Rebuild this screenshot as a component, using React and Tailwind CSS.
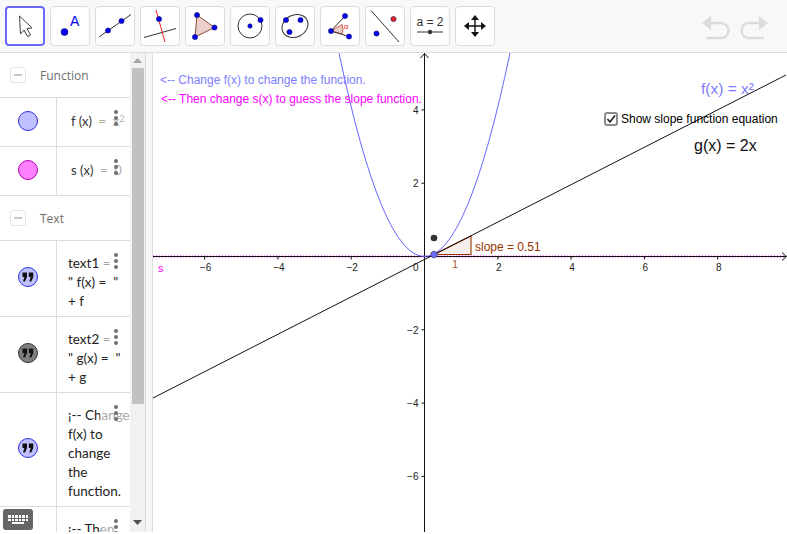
const Pt = ({ x, y, r = 2.6, fill = '#0000ff' }) => (
  <circle cx={x} cy={y} r={r} fill={fill} stroke="#1a1a50" strokeWidth="0.6" />
);

const ToolIcon = ({ box, children }) => (
  <svg width="40" height="40" viewBox={`${box} 6 40 40`} fill="none">
    {children}
  </svg>
);

const tools = [
  <ToolIcon box={5} key="move">
    <path d="M19.5 16 L20.5 34 L24 30 L27.5 36.5 L30.5 35 L27 28.5 L32 28 Z" fill="#fff" stroke="#444" strokeWidth="1" strokeLinejoin="round" />
  </ToolIcon>,
  <ToolIcon box={50} key="point">
    <Pt x={64.5} y={32} r={3.5} />
    <text x={70} y={26} fontSize="14" fill="#0000ff" fontFamily="Liberation Sans, sans-serif">A</text>
  </ToolIcon>,
  <ToolIcon box={95} key="line">
    <path d="M99 37 L131 14.5" stroke="#333" strokeWidth="1" />
    <Pt x={108} y={30.5} />
    <Pt x={121.5} y={21} />
  </ToolIcon>,
  <ToolIcon box={140} key="perp">
    <path d="M144 37.5 L176 28.5" stroke="#333" strokeWidth="1" />
    <path d="M156 10 L165 42" stroke="#ee2222" strokeWidth="1" />
    <Pt x={159} y={19} />
  </ToolIcon>,
  <ToolIcon box={185} key="polygon">
    <path d="M197 15 L214.5 27.5 L195 37 Z" fill="#eccfc8" stroke="#8a4a3a" strokeWidth="1" />
    <Pt x={197} y={15} />
    <Pt x={214.5} y={27.5} />
    <Pt x={195} y={37} />
  </ToolIcon>,
  <ToolIcon box={230} key="circle">
    <circle cx="250" cy="26" r="12" stroke="#333" strokeWidth="1" />
    <Pt x={250} y={26} r={2.2} />
    <Pt x={260.5} y={20} />
  </ToolIcon>,
  <ToolIcon box={275} key="conic">
    <ellipse cx="295" cy="26" rx="13.5" ry="11" transform="rotate(-28 295 26)" stroke="#333" strokeWidth="1" />
    <Pt x={286} y={20} />
    <Pt x={300.5} y={20} />
    <Pt x={289.5} y={32} />
  </ToolIcon>,
  <ToolIcon box={320} key="angle">
    <path d="M331 31 L342 24.5 A13 13 0 0 1 342 34 Z" fill="#eccfc8" stroke="#cc3333" strokeWidth="0.8" />
    <path d="M331 31 L345 16 M331 31 L349 36.5" stroke="#333" strokeWidth="1" />
    <text x={346} y={29} fontSize="8" fill="#ee2222" textAnchor="middle" fontFamily="Liberation Sans, sans-serif">α</text>
    <Pt x={345} y={16} />
    <Pt x={331} y={31} />
    <Pt x={349} y={36.5} />
  </ToolIcon>,
  <ToolIcon box={365} key="reflect">
    <path d="M371 10.5 L399 42" stroke="#333" strokeWidth="1" />
    <Pt x={393.5} y={19} fill="#ee2222" />
    <Pt x={376.5} y={33.5} />
  </ToolIcon>,
  <ToolIcon box={410} key="slider">
    <text x={430} y={25.5} fontSize="12" fill="#333" textAnchor="middle" fontFamily="Liberation Sans, sans-serif">a = 2</text>
    <path d="M417 32 L443 32" stroke="#555" strokeWidth="1.2" />
    <circle cx="430" cy="32" r="2.2" fill="#333" />
  </ToolIcon>,
  <ToolIcon box={455} key="pan">
    <path d="M475 17 V35 M466 26 H484" stroke="#111" strokeWidth="1.4" />
    <path d="M475 15 L479 20 H471 Z M475 37 L479 32 H471 Z M464 26 L469 22 V30 Z M486 26 L481 22 V30 Z" fill="#111" />
  </ToolIcon>,
];

const Toolbar = () => (
  <div className="h-[53px] shrink-0 flex items-start justify-between bg-[#f8f8f8] border-b border-[#dcdcdc] pl-[5px] pt-[6px] pr-[19px]">
    <div className="flex gap-[5px]">
      {tools.map((icon, i) => (
        <button
          key={i}
          className={i === 0
            ? 'w-10 h-10 bg-white rounded-[4px] border-2 border-[#6868fa]'
            : 'w-10 h-10 bg-white rounded-[4px] border border-[#dcdcdc] flex items-center justify-center'}
        >
          <span className={i === 0 ? 'block -m-[2px]' : 'block -m-px'}>{icon}</span>
        </button>
      ))}
    </div>
    <svg width="66" height="28" viewBox="0 0 66 28" fill="none" className="mt-[9px]">
      <path d="M3 8 H19 A7.5 7.5 0 0 1 19 23 H4" stroke="#dcdcdc" strokeWidth="2.4" />
      <path d="M0 8 L9 1 V15 Z" fill="#dcdcdc" />
      <path d="M63 8 H47 A7.5 7.5 0 0 0 47 23 H62" stroke="#dcdcdc" strokeWidth="2.4" />
      <path d="M66 8 L57 1 V15 Z" fill="#dcdcdc" />
    </svg>
  </div>
);

const Dots = () => (
  <div className="absolute right-0 top-0 w-[30px] h-[30px] bg-white/60 pl-[14px] pt-[12px] flex flex-col gap-[2px]">
    <span className="w-[4px] h-[4px] rounded-full bg-[#707070]" />
    <span className="w-[4px] h-[4px] rounded-full bg-[#707070]" />
    <span className="w-[4px] h-[4px] rounded-full bg-[#707070]" />
  </div>
);

const Marble = ({ fill, stroke, quote }) => (
  <div className="w-[20px] h-[20px] rounded-full border flex items-center justify-center" style={{ background: fill, borderColor: stroke }}>
    {quote && (
      <svg width="12" height="10" viewBox="0 0 12 10">
        <path d="M0.5 0.5 H5 V5 L3 9.5 H1 L2.4 5 H0.5 Z M6.8 0.5 H11.3 V5 L9.3 9.5 H7.3 L8.7 5 H6.8 Z" fill="#111" />
      </svg>
    )}
  </div>
);

const Header = ({ label }) => (
  <div className="flex items-center h-[45px] border-b border-[#dcdcdc] pl-[10px]">
    <span className="w-[16px] h-[16px] rounded-[3px] border border-[#e4e4e4] flex items-center justify-center">
      <span className="w-[8px] h-[2px] bg-[#c8c8c8]" />
    </span>
    <span className="ml-[14px] pt-[2px] text-[12px] text-[#6e6e6e] font-['Open_Sans',sans-serif]">{label}</span>
  </div>
);

const Row = ({ height, marble, children, small }) => (
  <div className="flex border-b border-[#dcdcdc]" style={{ height }}>
    <div className="w-[57px] shrink-0 flex items-center justify-center pb-[3px] border-r border-[#dcdcdc]">{marble}</div>
    <div className={small
      ? "relative flex-1 overflow-hidden pl-[14px] pt-[16px] text-[13px] leading-[15px] text-[#333] font-['Lato',sans-serif] whitespace-pre"
      : "relative flex-1 overflow-hidden pl-[11px] pt-[13px] text-[13.5px] leading-[19px] text-[#222] font-['Lato',sans-serif] whitespace-pre"}>
      {children}
      <Dots />
    </div>
  </div>
);

const AlgebraPanel = () => (
  <div className="relative w-[153px] shrink-0 flex bg-white overflow-hidden">
    <div className="w-[130px] shrink-0">
      <Header label="Function" />
      <Row height={49} small marble={<Marble fill="#bfbfff" stroke="#3030e0" />}>
        <span>{'f (x)  =  x'}<sup className="text-[9px]">2</sup></span>
      </Row>
      <Row height={49} small marble={<Marble fill="#ff80ff" stroke="#b000b0" />}>
        <span>{'s (x)  =  0'}</span>
      </Row>
      <Header label="Text" />
      <Row height={76} marble={<Marble fill="#bfbfff" stroke="#3030e0" quote />}>
        <div>text1 =</div>
        <div>{'" f(x) =  "'}</div>
        <div>+ f</div>
      </Row>
      <Row height={76} marble={<Marble fill="#808080" stroke="#333" quote />}>
        <div>text2 =</div>
        <div>{'" g(x) =  "'}</div>
        <div>+ g</div>
      </Row>
      <Row height={114} marble={<Marble fill="#bfbfff" stroke="#3030e0" quote />}>
        <div>¡-- Change</div>
        <div>f(x) to</div>
        <div>change</div>
        <div>the</div>
        <div>function.</div>
      </Row>
      <Row height={114} marble={null}>
        <div>¡-- Then</div>
      </Row>
    </div>
    <div className="w-[15px] shrink-0 flex flex-col items-center bg-[#f1f1f1]">
      <svg width="9" height="5" viewBox="0 0 9 5" className="mt-[5px]"><path d="M4.5 0 L9 5 H0 Z" fill="#a3a3a3" /></svg>
      <div className="w-[12px] h-[336px] mt-[5px] bg-[#c1c1c1]" />
      <svg width="9" height="5" viewBox="0 0 9 5" className="mt-[116px]"><path d="M4.5 5 L9 0 H0 Z" fill="#505050" /></svg>
    </div>
    <div className="w-[8px] shrink-0 bg-[#f5f5f5] border-x border-[#dcdcdc]" />
    <div className="absolute left-[3px] bottom-[2px] w-[30px] h-[21px] rounded-[3px] bg-[#666] flex flex-col items-center justify-center gap-[1px]">
      <div className="grid grid-cols-6 gap-[1px]">
        {Array.from({ length: 12 }).map((_, i) => <span key={i} className="w-[2.5px] h-[2.5px] bg-white" />)}
      </div>
      <span className="w-[12px] h-[2px] bg-white" />
    </div>
  </div>
);

const xTicks = [-6, -4, -2, 2, 4, 6, 8];
const yTicks = [4, 2, -2, -4, -6];
const X0 = 271.5;
const Y0 = 203.5;
const UNIT = 36.65;
const axisFont = { fontFamily: 'Liberation Sans, sans-serif' };

const Graph = () => (
  <svg width="634" height="479" viewBox="0 0 634 479" className="block" style={axisFont}>
    <path d={`M0 ${Y0} H633`} stroke="#ff00ff" strokeOpacity="0.45" strokeWidth="3" strokeDasharray="1 2" />
    <path d={`M${X0} 0 V479 M0 ${Y0} H633`} stroke="#111" strokeWidth="1" />
    <path d={`M${X0 - 4} 5 L${X0} 0.5 L${X0 + 4} 5 M629 ${Y0 - 4} L633.5 ${Y0} L629 ${Y0 + 4}`} stroke="#111" strokeWidth="1" fill="none" />
    {xTicks.map((t) => (
      <g key={t}>
        <path d={`M${X0 + t * UNIT} ${Y0} v3`} stroke="#111" />
        <text x={X0 + t * UNIT + 1} y={Y0 + 14} fontSize="10" textAnchor="middle" fill="#222">{t < 0 ? `−${-t}` : t}</text>
      </g>
    ))}
    {yTicks.map((t) => (
      <g key={t}>
        <path d={`M${X0 - 3} ${Y0 - t * UNIT} h3`} stroke="#111" />
        <text x={X0 - 6} y={Y0 - t * UNIT + 4} fontSize="10" textAnchor="end" fill="#222">{t < 0 ? `−${-t}` : t}</text>
      </g>
    ))}
    <text x={X0 - 6} y={Y0 + 14} fontSize="10" textAnchor="end" fill="#222">0</text>
    <text x={5} y={Y0 + 15} fontSize="11" fill="#ff00ff">s</text>
    <path d={`M186 0 Q${X0} 407 357 0`} stroke="#6666ff" strokeWidth="1" fill="none" />
    <path d="M281 201.5 L318 201.5 V183 Z" fill="#993300" fillOpacity="0.08" stroke="#993300" strokeWidth="1.1" />
    <path d="M0 345 L633 22" stroke="#111" strokeWidth="1" />
    <text x={322} y={198} fontSize="12" fill="#993300">slope = 0.51</text>
    <text x={302} y={215} fontSize="11" fill="#993300" fillOpacity="0.85" textAnchor="middle">1</text>
    <circle cx="281" cy="185" r="3.3" fill="#333" />
    <circle cx="281" cy="201.5" r="3.3" fill="#6a6aff" stroke="#333" strokeWidth="0.6" />
    <text x={7} y={31} fontSize="12" fill="#7d7dff">{'<-- Change f(x) to change the function.'}</text>
    <text x={8} y={50} fontSize="12" fill="#ff00ff">{'<-- Then change s(x) to guess the slope function.'}</text>
    <text x={548} y={41} fontSize="15.5" fill="#7d7dff">f(x) = x²</text>
    <text x={541} y={98} fontSize="16" fill="#111">g(x) = 2x</text>
  </svg>
);

const App = () => (
  <div className="w-[787px] h-[534px] flex flex-col overflow-hidden bg-white">
    <Toolbar />
    <div className="h-[479px] shrink-0 flex">
      <AlgebraPanel />
      <div className="relative flex-1 overflow-hidden">
        <Graph />
        <label className="absolute left-[451px] top-[57px] flex items-center gap-[3px] text-[12px] text-black font-['Liberation_Sans',sans-serif] whitespace-nowrap">
          <span className="w-[14px] h-[14px] rounded-[3px] border-2 border-[#8a8a8a] flex items-center justify-center bg-white">
            <svg width="10" height="10" viewBox="0 0 10 10"><path d="M1.5 5 L4 8 L9 1.5" stroke="#222" strokeWidth="1.6" fill="none" /></svg>
          </span>
          Show slope function equation
        </label>
      </div>
    </div>
  </div>
);

export default App;
